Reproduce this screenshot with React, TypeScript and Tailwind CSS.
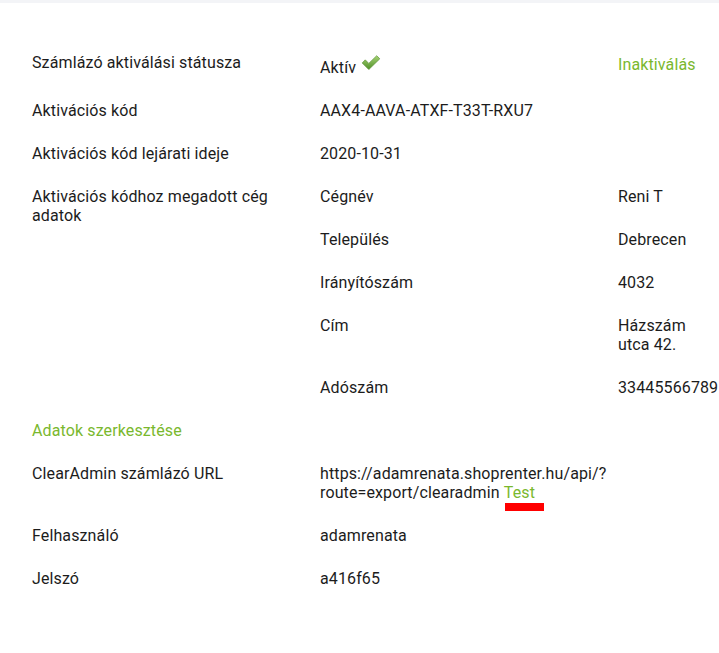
import React from "react";

const Check = () => (
  <svg width="20" height="15" viewBox="0 0 22 17" className="inline-block relative top-[-3px] ml-[5px]" style={{ verticalAlign: "baseline" }}>
    <defs>
      <linearGradient id="g" x1="0" y1="0" x2="0" y2="1">
        <stop offset="0" stopColor="#a6d473" />
        <stop offset="1" stopColor="#4f8f28" />
      </linearGradient>
    </defs>
    <path d="M1 9 L4.5 5.5 L8.5 9.5 L17.5 0.8 L21 4.3 L8.5 16.5 Z" fill="url(#g)" stroke="#5e9339" strokeWidth="0.8" strokeLinejoin="round" />
  </svg>
);

const Row = ({ label, children, third }: { label: React.ReactNode; children?: React.ReactNode; third?: React.ReactNode }) => (
  <div className="flex">
    <div className="w-[288px] shrink-0 py-3">{label}</div>
    <div className="w-[298px] shrink-0 py-3">{children}</div>
    <div className="flex-1 py-3 whitespace-nowrap">{third}</div>
  </div>
);

export default function App() {
  const green = "text-[#7ab82e]";
  return (
    <div className="w-[719px] h-[653px] overflow-hidden bg-white text-[16px] leading-[19px] tracking-[0.12px] text-[#1c1c1c]" style={{ fontFamily: "Roboto, sans-serif" }}>
      <div className="h-[3px] bg-[#f3f4f7]" />
      <div className="pt-[38px] pl-[32px]">
        <div className="flex">
          <div className="w-[288px] shrink-0 py-3">Számlázó aktiválási státusza</div>
          <div className="w-[298px] shrink-0 pt-[17px] pb-3">
            Aktív<Check />
          </div>
          <div className={`flex-1 pt-[14px] whitespace-nowrap ${green}`}>Inaktiválás</div>
        </div>
        <Row label="Aktivációs kód">AAX4-AAVA-ATXF-T33T-RXU7</Row>
        <Row label="Aktivációs kód lejárati ideje">2020-10-31</Row>
        <div className="flex">
          <div className="w-[288px] shrink-0 py-3 pr-6">Aktivációs kódhoz megadott cég adatok</div>
          <div className="flex-1 flex flex-col">
            {[
              ["Cégnév", "Reni T"],
              ["Település", "Debrecen"],
              ["Irányítószám", "4032"],
              ["Cím", <>Házszám<br />utca 42.</>],
              ["Adószám", "33445566789"],
            ].map(([a, b], i) => (
              <div key={i} className="flex">
                <div className="w-[298px] shrink-0 py-3">{a}</div>
                <div className="flex-1 py-3 whitespace-nowrap">{b}</div>
              </div>
            ))}
          </div>
        </div>
        <div className={`py-3 ${green}`}>Adatok szerkesztése</div>
        <Row label="ClearAdmin számlázó URL">
          <div className="pr-2">
            https://adamrenata.shoprenter.hu/api/?
            <br />
            route=export/clearadmin{" "}
            <span className="relative inline-block">
              <span className={green}>Test</span>
              <span className="absolute left-[1px] top-[20px] w-[39px] h-[8px] bg-[#ff0000]" />
            </span>
          </div>
        </Row>
        <Row label="Felhasználó">adamrenata</Row>
        <Row label="Jelszó">a416f65</Row>
      </div>
    </div>
  );
}
